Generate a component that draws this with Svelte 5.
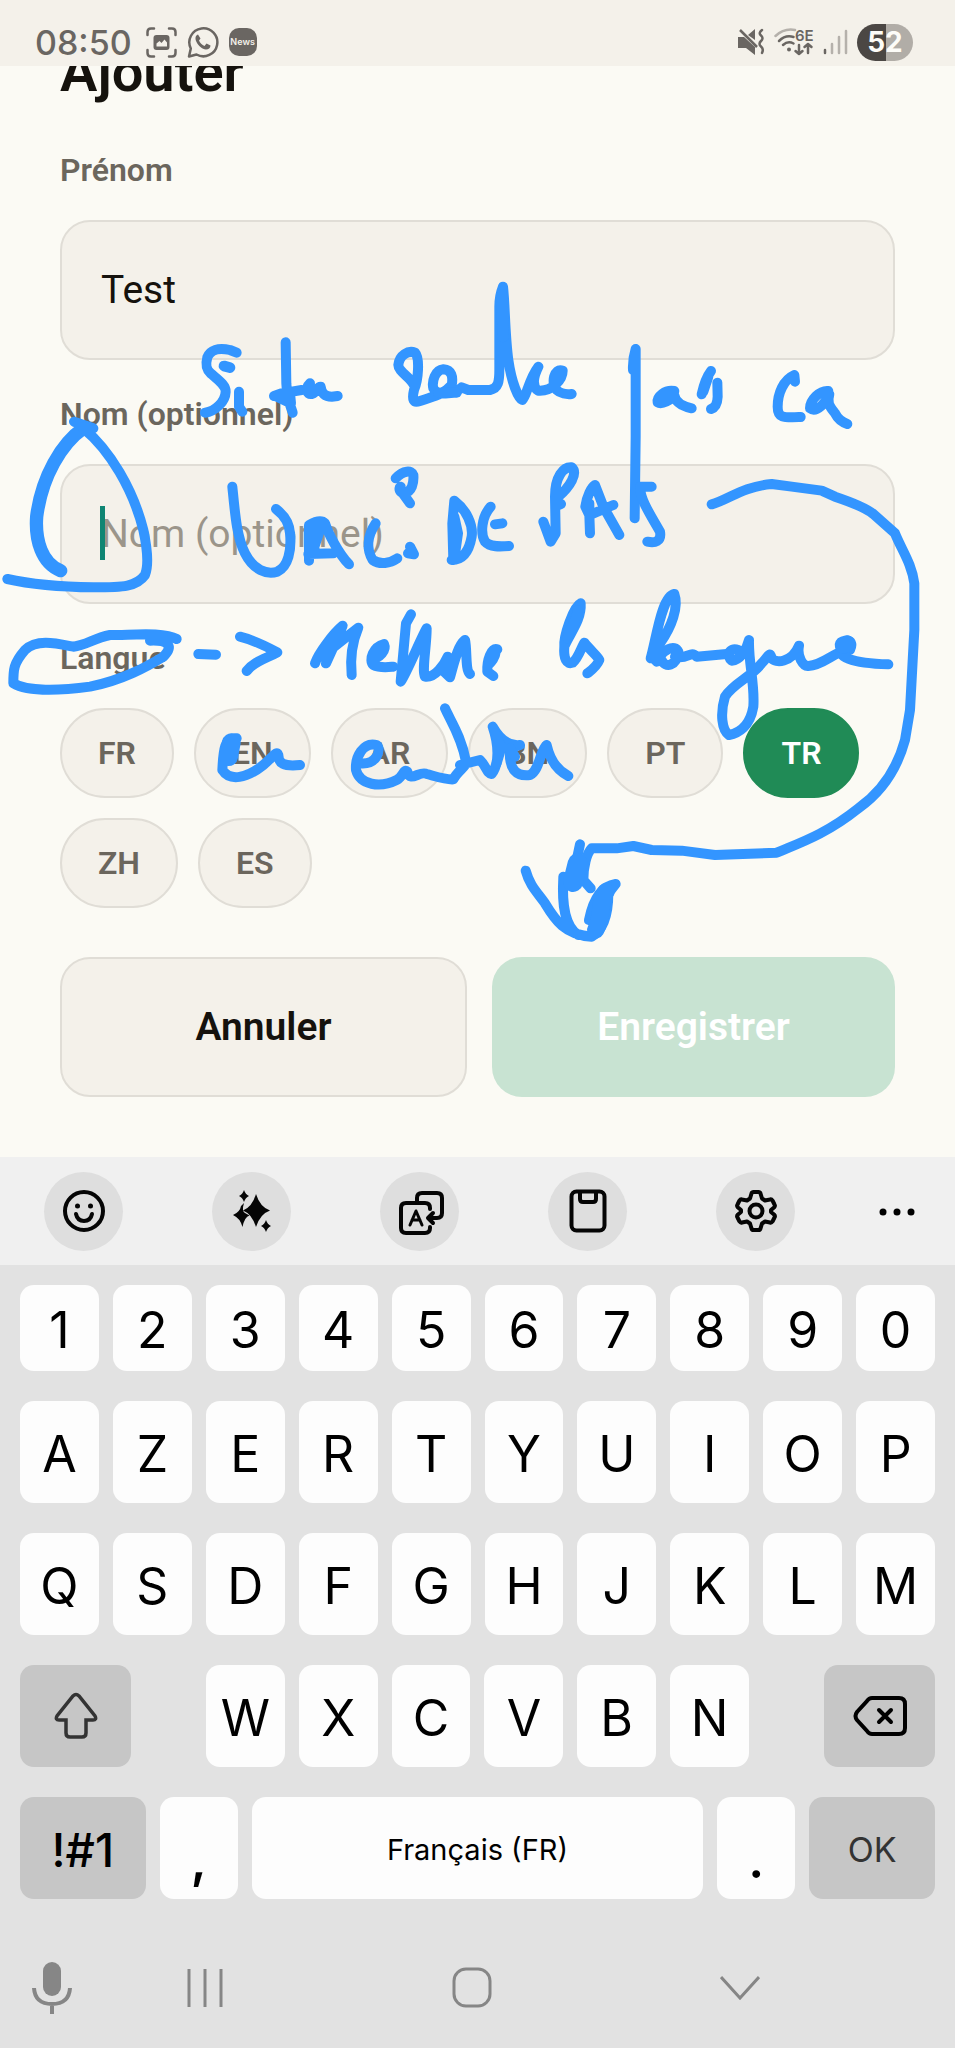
<script lang="ts">
  const languages: string[] = ['FR', 'EN', 'AR', 'BN', 'PT', 'TR', 'ZH', 'ES']
  const keyRows: string[] = ['1234567890', 'AZERTYUIOP', 'QSDFGHJKLM']

  let firstName = $state('Test')
  let lastName = $state('')
  let language = $state('TR')

  const canSave = $derived(firstName !== '' && lastName !== '')
</script>

<div class="screen">
  <header class="status">
    <div class="left">
      <span class="time">08:50</span>
      <svg width="31" height="31" viewBox="0 0 31 31" fill="none">
        <path
          d="M1.500 8V5q0-3.500 3.500-3.500H8M23 1.500h3q3.500 0 3.500 3.500v3M29.500 23v3q0 3.500-3.500 3.500h-3M8 29.500H5q-3.500 0-3.500-3.500v-3"
          stroke="#6a6662"
          stroke-width="2.500"
          stroke-linecap="round"
        />
        <rect x="7.500" y="8" width="16" height="15" rx="3" fill="#6a6662" />
        <path d="M10.500 19.500v-3l3-2.500 2 2 3-3.500 2.500 3v4z" fill="#f4f1ea" />
      </svg>
      <svg width="32" height="32" viewBox="0 0 32 32" fill="none">
        <path
          d="M2 30.500l1.800-8A14 14 0 1 1 9.500 28.500z"
          stroke="#6a6662"
          stroke-width="2.500"
          stroke-linejoin="round"
        />
        <path
          d="M11 8.500c-3 1-3 4.500-1.500 7.500 2 4 5.500 7 9.500 7.500 2.500 0 4.500-1.500 4.500-4l-4-2-2 2.500c-2.500-1-4.500-3-5.500-5.500l1.500-2z"
          fill="#6a6662"
        />
      </svg>
      <span class="news">News</span>
    </div>
    <div class="right">
      <svg width="28" height="28" viewBox="0 0 28 28">
        <path d="M1 9h6L18 19v8l-9-7H1zM11 7l7-6v11z" fill="#6a6662" />
        <path d="M3 2l17 17" stroke="#6a6662" stroke-width="2.500" />
        <path
          d="M25 2q-4 3-1 5.500t0 5.500 0 5.500 1 6.500"
          fill="none"
          stroke="#6a6662"
          stroke-width="2.500"
          stroke-linecap="round"
        />
      </svg>
      <svg width="40" height="30" viewBox="0 0 40 30" fill="none">
        <path d="M1.500 9Q10 1 21 3" stroke="#b5b1ab" stroke-width="2.500" stroke-linecap="round" />
        <g stroke="#6a6662" stroke-width="2.500" stroke-linecap="round" stroke-linejoin="round">
          <path d="M5 14q6.500-6.500 14.500-4M9 18q5-4.500 10.500-1.500" />
          <path d="M25 18v9m-3.500-3l3.500 3 3.500-3M34 26v-9m-3.500 3l3.500-3 3.500 3" />
        </g>
        <circle cx="15" cy="22.500" r="2" fill="#6a6662" />
        <text x="21" y="14" class="wifi-band">6E</text>
      </svg>
      <svg width="25" height="28" viewBox="0 0 25 28" stroke-width="2.500" stroke-linecap="round">
        <path d="M2 22v3" stroke="#6a6662" />
        <path d="M9 16v9M16 9v16M23 3v22" stroke="#b5b1ab" />
      </svg>
      <span class="battery">52</span>
    </div>
  </header>

  <main>
    <h1>Ajouter</h1>

    <form onsubmit={(event) => event.preventDefault()}>
      <div class="field">
        <label for="first-name">Prénom</label>
        <input id="first-name" type="text" bind:value={firstName} />
      </div>

      <div class="field">
        <label for="last-name">Nom (optionnel)</label>
        <div class="focused">
          <input id="last-name" type="text" placeholder="Nom (optionnel)" bind:value={lastName} />
          <span class="caret"></span>
        </div>
      </div>

      <div class="field">
        <span class="label" id="language-label">Langue</span>
        <div class="chips" role="group" aria-labelledby="language-label">
          {#each languages as code}
            <button
              type="button"
              class="chip"
              class:selected={language === code}
              aria-pressed={language === code}
              onclick={() => (language = code)}
            >
              {code}
            </button>
          {/each}
        </div>
      </div>

      <div class="actions">
        <button type="button" class="cancel">Annuler</button>
        <button type="submit" class="save" disabled={!canSave}>Enregistrer</button>
      </div>
    </form>
  </main>

  <!-- Pen strokes, three units to the pixel -->
  <svg class="ink" width="955" height="1000" viewBox="0 0 2865 3000" aria-hidden="true">
    <g transform="translate(570 810)">
      <path d="M140 248L120 240C85 232 60 240 52 262C46 285 48 298 62 310C85 330 108 345 107 365C106 395 75 425 45 428" />
      <path d="M102 288L120 293" stroke-width="32" />
      <path d="M147 365V410L157 425" />
      <path d="M287 217L289 340L292 380L308 428M252 378L275 370L335 360M256 378L292 395L300 370L303 400" />
      <path d="M360 340C345 355 350 375 365 372C385 365 380 350 392 350C395 370 405 380 425 380L443 378" />
      <path d="M672 345C660 320 625 305 625 285C628 255 655 240 675 248C690 265 685 330 672 360C665 390 670 400 690 393C725 380 760 375 785 345C790 320 785 300 760 298C735 300 725 335 730 355C740 378 790 375 815 352L835 360L900 360C925 355 928 335 928 300V110C928 75 935 60 939 50C945 100 945 200 955 270C965 340 985 385 997 390C1010 380 1015 330 1045 290C1030 320 1025 350 1045 362C1085 365 1118 330 1118 302C1092 292 1082 340 1100 360C1110 370 1130 374 1145 372" />
      <path d="M745 368L800 368" />
      <path d="M936 75L939 200" stroke-width="34" />
      <path d="M1337 237C1330 260 1328 280 1329 300M1337 237V500L1334 745" />
      <path d="M127 650C135 730 140 800 165 850C190 900 230 915 262 905C295 890 305 840 300 790C298 755 275 730 258 717" />
      <path d="M357 872V765C375 755 395 750 405 760C415 790 445 850 477 883M355 852L430 850M395 765L370 840M364 770L374 840" />
      <path d="M557 760C530 800 530 840 548 870C570 885 600 880 622 865M660 830L672 853L654 850" />
      <path d="M617 625C640 600 665 600 670 615C672 640 665 665 645 668C628 670 625 655 632 650M640 672L660 700" />
      <path d="M793 692L787 760L790 870M793 692C830 720 850 765 845 800C838 840 820 870 785 870M793 740L804 790L794 860" />
      <path d="M902 710C875 740 870 790 885 815C900 832 930 830 957 828M915 763L937 760" />
      <path d="M1060 755L1082 815L1097 790L1095 680C1095 620 1120 590 1145 592C1165 610 1140 650 1105 680M1100 708L1113 702" />
      <path d="M1200 790L1198 735L1186 710C1190 680 1205 650 1215 645L1240 710L1288 795M1200 735L1270 705M1198 700V735" />
      <path d="M1385 650L1350 650C1350 690 1385 740 1410 785C1415 815 1395 820 1372 815" />
      <path d="M25 1152L78 1154M150 1100C190 1110 240 1135 262 1147C230 1165 190 1175 170 1203" />
      <path d="M375 1180C385 1150 430 1090 458 1067L440 1110L408 1180L420 1140L505 1073C485 1120 480 1165 485 1215M395 1160L440 1100" />
      <path d="M545 1165C570 1165 590 1140 582 1122C550 1130 535 1170 550 1185C570 1195 590 1192 610 1190" />
      <path d="M663 1033L648 1060L632 1235C650 1210 690 1110 710 1075C710 1130 695 1200 705 1220C735 1225 765 1180 773 1160L762 1205L780 1222C790 1190 800 1130 825 1110C832 1140 825 1200 840 1212" />
      <path d="M922 1138C905 1130 890 1170 892 1205L910 1218M918 1142C915 1165 905 1175 895 1185" />
      <path d="M1172 1000C1150 1010 1120 1100 1123 1130C1120 1165 1130 1185 1148 1178C1165 1165 1175 1130 1183 1118C1200 1140 1225 1160 1228 1170C1220 1190 1205 1200 1192 1210M1172 1000C1175 1050 1140 1090 1125 1125" />
      <path d="M1162 1020C1162 1050 1142 1070 1132 1105" />
      <path d="M140 1405C100 1400 100 1450 97 1500C120 1535 170 1525 220 1485C250 1460 260 1440 265 1455C265 1480 280 1490 330 1485" />
      <path d="M124 1418L116 1460" stroke-width="56" />
      <path d="M510 1480C560 1485 575 1440 560 1425C520 1415 495 1460 498 1500C510 1545 570 1555 620 1530C640 1520 640 1495 652 1505C660 1540 690 1500 710 1512C740 1520 770 1530 790 1528C805 1500 830 1490 828 1475C815 1400 780 1350 765 1315M810 1485L870 1470C890 1490 890 1510 905 1512C930 1480 925 1420 908 1370C925 1400 950 1430 990 1425L960 1435C955 1500 980 1520 1020 1515C1050 1500 1050 1440 1070 1425C1080 1470 1100 1500 1135 1518" />
      <path d="M915 1390L935 1430L920 1480M960 1435L975 1460" />
    </g>
    <g transform="translate(1425 600)">
      <path d="M598 573C570 568 545 590 548 607C560 615 590 600 598 585C600 605 620 618 650 625M565 595L590 582" />
      <path d="M708 513C695 530 685 560 680 583M700 530L685 575M727 548L728 590C727 612 722 622 708 627" />
      <path d="M960 545L958 525C925 540 908 580 908 620C908 655 925 653 977 651M1060 573C1035 570 1005 600 1005 625C1025 640 1055 605 1063 583C1055 610 1065 620 1080 640C1090 660 1105 668 1117 672" />
    </g>
    <g transform="translate(1425 1350)">
      <path d="M527 625C545 560 560 440 598 432C612 470 590 530 555 580C540 600 530 625 545 635C560 600 600 580 610 605C605 650 570 655 560 630M600 620C640 630 645 600 665 620L755 612" />
      <path d="M790 600C760 590 755 620 770 632C795 630 815 600 822 570C820 640 840 700 835 770C825 830 790 850 762 855C740 840 735 790 750 740C775 700 830 680 860 640C880 620 885 600 890 625C900 640 950 640 972 587C965 620 985 650 1000 648C1050 645 1080 600 1125 600C1140 570 1110 560 1100 590C1080 620 1130 640 1240 643" />
      <path d="M1105 585L1115 582" stroke-width="52" />
      <path d="M710 163C760 150 800 110 890 102L950 110L1040 122L1080 140C1140 160 1180 180 1195 192L1260 250C1280 300 1310 340 1318 400V540L1305 780L1290 870C1260 980 1200 1040 1150 1075C1050 1155 970 1180 905 1208L720 1215L620 1202L530 1200L475 1188L425 1195L350 1195C335 1210 325 1250 325 1290L347 1315" />
      <path d="M152 1262C165 1310 190 1330 210 1360C240 1410 270 1455 350 1460C385 1440 400 1390 400 1330L422 1302C370 1310 350 1370 342 1410L375 1420M265 1280C260 1370 270 1430 310 1455M315 1183L305 1230" />
      <path d="M308 1240L294 1296" stroke-width="60" />
      <path d="M393 1325C370 1350 385 1400 362 1440" stroke-width="52" />
    </g>
    <g transform="translate(0 1350)">
      <path d="M182 362C125 340 105 270 110 200C125 80 185 -20 250 -65" stroke-width="40" />
      <path d="M222 -85L280 -65M250 -65C330 0 400 120 430 240C445 310 445 350 435 375C410 410 370 412 280 412C150 410 80 400 22 387" />
      <path d="M530 567C490 545 400 555 330 555C280 565 260 585 220 590C170 580 110 565 75 600C40 640 40 660 40 700C80 725 180 722 270 710C370 690 440 650 490 620C520 590 510 570 450 572" />
    </g>
  </svg>

  <section class="keyboard">
    <div class="toolbar">
      <div class="tools">
        <button class="tool" aria-label="Emoji">
          <svg viewBox="0 0 44 44">
            <circle cx="22" cy="22" r="19" />
            <path d="M14 25q1.500 7 8 7t8-7" />
            <circle class="solid" cx="15.500" cy="17" r="2.500" />
            <circle class="solid" cx="28.500" cy="17" r="2.500" />
          </svg>
        </button>
        <button class="tool" aria-label="Assistant">
          <svg viewBox="0 0 44 44">
            <g class="solid">
              <path d="M26 5q4 13 14 16.500Q30 25 26 38 22 25 13 21.500 22 18 26 5z" />
              <path d="M14 14q-2.500 8 1 10l4.500 2.500Q14.500 28 12.500 38 10 29 3 26q7-3 8-9z" />
              <path d="M14 1q1.500 4.500 5 6-3.500 1.500-5 6-1.500-4.500-5-6 3.500-1.500 5-6zM36 31q1.500 4.500 5 6-3.500 1.500-5 6-1.500-4.500-5-6 3.500-1.500 5-6z" />
            </g>
          </svg>
        </button>
        <button class="tool" aria-label="Translate">
          <svg viewBox="0 0 44 44">
            <path d="M32 20v-1q0-5-5-5H8q-5 0-5 5v20q0 5 5 5h19q5 0 5-5v-1" />
            <path d="M19 13V9q0-5 5-5h15q5 0 5 5v15q0 5-5 5h-8m4-5l-5 5 5 5" />
            <path d="M12 36l6-14 6 14m-10-5h8" stroke-width="3" />
          </svg>
        </button>
        <button class="tool" aria-label="Clipboard">
          <svg viewBox="0 0 44 44">
            <rect x="5.500" y="2.500" width="33" height="39" rx="5" />
            <path d="M14 4v6q0 3 3 3h10q3 0 3-3V4" />
          </svg>
        </button>
        <button class="tool" aria-label="Settings">
          <svg viewBox="0 0 44 44">
            <path d="M19.500 3h5q1.500 0 2 1.500l1.500 5 3 2 5-1q1.500-.5 2.500 1l2 4q1 1.500-.5 3L37 21v2l3 2.500q1.500 1.500.5 3l-2 4q-1 1.500-2.500 1l-5-1-3 2-1.500 5q-.5 1.500-2 1.500h-5q-1.500 0-2-1.500l-1.500-5-3-2-5 1q-1.500.5-2.500-1l-2-4q-1-1.500.5-3L7 23v-2l-3-2.500q-1.500-1.500-.5-3l2-4q1-1.500 2.500-1l5 1 3-2 1.500-5q.5-1.500 2-1.500z" />
            <circle cx="22" cy="22" r="6.500" />
          </svg>
        </button>
      </div>
      <button class="more" aria-label="More">
        <svg width="36" height="8" viewBox="0 0 36 8">
          <circle cx="4" cy="4" r="3.500" />
          <circle cx="18" cy="4" r="3.500" />
          <circle cx="32" cy="4" r="3.500" />
        </svg>
      </button>
    </div>

    <div class="keys">
      {#each keyRows as row, rowIndex}
        <div class="row" class:digits={rowIndex === 0}>
          {#each row as key}
            <button class="key">{key}</button>
          {/each}
        </div>
      {/each}

      <div class="row">
        <button class="key dark shift" aria-label="Shift">
          <svg width="46" height="48" viewBox="0 0 46 48">
            <path
              d="M20 4q3-3 6 0l16 20q2 4-2 4h-7v13q0 4-4 4H17q-4 0-4-4V28H6q-4 0-2-4z"
              fill="none"
              stroke="#333"
              stroke-width="3.500"
            />
          </svg>
        </button>
        <div class="letters">
          {#each 'WXCVBN' as key}
            <button class="key">{key}</button>
          {/each}
        </div>
        <button class="key dark shift" aria-label="Backspace">
          <svg width="54" height="42" viewBox="0 0 54 42" fill="none" stroke="#000" stroke-width="4" stroke-linecap="round">
            <path d="M19 3h27q6 0 6 6v24q0 6-6 6H19q-3 0-5-3L4 25q-3-4 0-8L14 6q2-3 5-3z" />
            <path d="M26 15l12 12m0-12L26 27" />
          </svg>
        </button>
      </div>

      <div class="row">
        <button class="key dark symbols">!#1</button>
        <button class="key mark">,</button>
        <button class="key space">Français (FR)</button>
        <button class="key mark">.</button>
        <button class="key dark ok">OK</button>
      </div>
    </div>

    <nav>
      <button aria-label="Voice input">
        <svg viewBox="0 0 40 54">
          <rect x="11" y="1" width="18" height="34" rx="9" fill="#868686" stroke="none" />
          <path d="M2 27q1 16 18 16t18-16M20 43v10" stroke-width="4" />
        </svg>
      </button>
      <button aria-label="Recents">
        <svg viewBox="0 0 40 54"><path d="M4 8v38M20 8v38M36 8v38" /></svg>
      </button>
      <button aria-label="Home">
        <svg viewBox="0 0 40 54"><rect x="2" y="8" width="36" height="37" rx="12" /></svg>
      </button>
      <button aria-label="Hide keyboard">
        <svg viewBox="0 0 40 54"><path d="M1 16l19 21 19-21" /></svg>
      </button>
    </nav>
  </section>
</div>

<style>
  :global(body) {
    margin: 0;
    background: #e2e2e2;
  }

  .screen {
    position: relative;
    background: #fbfaf4;
    font-family: Roboto, 'Liberation Sans', sans-serif;
    overflow: hidden;
  }

  button,
  input {
    box-sizing: border-box;
    margin: 0;
    padding: 0;
    border: 0;
    font-family: inherit;
  }

  .status {
    display: flex;
    justify-content: space-between;
    box-sizing: border-box;
    height: 66px;
    padding: 18px 42px 0 35px;
    background: #f4f1ea;
    color: #6a6662;
    font-family: Inter, sans-serif;
  }

  .left,
  .right {
    display: flex;
    align-items: center;
    height: 48px;
  }

  .left {
    gap: 10px;
  }

  .right {
    gap: 9px;
  }

  .time {
    margin-right: 4px;
    font-size: 34px;
    font-weight: 500;
  }

  .news {
    width: 28px;
    height: 28px;
    border-radius: 10px;
    background: #6a6662;
    color: #f4f1ea;
    font-size: 9px;
    font-weight: 600;
    line-height: 28px;
    text-align: center;
  }

  .wifi-band {
    fill: #6a6662;
    font-size: 15px;
    font-weight: 600;
  }

  .battery {
    width: 56px;
    height: 37px;
    border-radius: 19px;
    background: linear-gradient(to right, #4b4744 51%, #b1ada7 51%);
    color: #fdfcf8;
    font-size: 28px;
    font-weight: 700;
    line-height: 37px;
    text-align: center;
  }

  /* Scrolled a little, so the title is cut off by the status bar */
  main {
    padding: 0 60px 60px;
    overflow: hidden;
  }

  h1 {
    margin: -24px 0 48px;
    color: #15120d;
    font-size: 56px;
    font-weight: 600;
    line-height: 61px;
  }

  form {
    display: flex;
    flex-direction: column;
    gap: 35px;
  }

  .field {
    display: flex;
    flex-direction: column;
    gap: 30px;
  }

  label,
  .label {
    color: #6b665d;
    font-size: 32px;
    font-weight: 600;
    line-height: 39px;
  }

  input {
    width: 100%;
    height: 140px;
    padding: 0 39px;
    border: 2px solid #e0ddd6;
    border-radius: 30px;
    outline: 0;
    background: #f4f1ea;
    color: #15120d;
    font-size: 39px;
  }

  input::placeholder {
    color: #9b958a;
    opacity: 1;
  }

  .focused {
    position: relative;
  }

  .caret {
    position: absolute;
    top: 42px;
    left: 40px;
    width: 5px;
    height: 54px;
    background: #0f8573;
  }

  .chips {
    display: flex;
    flex-wrap: wrap;
    gap: 20px;
  }

  .chip {
    height: 90px;
    padding: 0 36px;
    border: 2px solid #e0ddd6;
    border-radius: 45px;
    background: #f4f1ea;
    color: #6b665d;
    font-size: 32px;
    font-weight: 600;
  }

  .chip.selected {
    border-color: #208b56;
    background: #208b56;
    color: #fff;
  }

  .actions {
    display: flex;
    gap: 25px;
    margin-top: 14px;
  }

  .actions button {
    flex: 1;
    height: 140px;
    border-radius: 30px;
    font-size: 39px;
    font-weight: 600;
  }

  .cancel {
    border: 2px solid #e0ddd6;
    background: #f4f1ea;
    color: #15120d;
  }

  .save {
    background: #208b56;
    color: #fff;
  }

  .save:disabled {
    background: #c8e3d2;
  }

  .ink {
    position: absolute;
    top: 0;
    left: 0;
    fill: none;
    stroke: #3395ff;
    stroke-width: 30px;
    stroke-linecap: round;
    stroke-linejoin: round;
    pointer-events: none;
  }

  .keyboard {
    background: #e2e2e2;
    font-family: Inter, sans-serif;
  }

  .toolbar {
    display: flex;
    justify-content: space-between;
    align-items: center;
    box-sizing: border-box;
    height: 108px;
    padding: 0 40px 0 44px;
    background: #f0f0f0;
  }

  .tools {
    display: flex;
    gap: 89px;
  }

  .tool {
    display: grid;
    place-content: center;
    width: 79px;
    height: 79px;
    border-radius: 50%;
    background: #dedede;
  }

  .tool svg {
    width: 44px;
    height: 44px;
    overflow: visible;
    fill: none;
    stroke: #050505;
    stroke-width: 4px;
    stroke-linecap: round;
    stroke-linejoin: round;
  }

  .tool .solid {
    fill: #050505;
    stroke: none;
  }

  .more {
    width: 36px;
    background: none;
  }

  .keys {
    display: flex;
    flex-direction: column;
    gap: 30px;
    padding: 20px 20px 0;
  }

  .row,
  .letters {
    display: flex;
    gap: 14px;
  }

  .letters {
    flex: 543;
    margin: 0 61px;
  }

  .key {
    display: grid;
    flex: 1 1 0;
    place-content: center;
    min-width: 0;
    height: 102px;
    padding-top: 3px;
    border-radius: 14px;
    background: #fdfdfd;
    color: #000;
    font-size: 50px;
  }

  .digits .key {
    height: 86px;
  }

  .dark {
    background: #c6c6c6;
  }

  .shift {
    flex-grow: 111;
    padding-top: 0;
  }

  .symbols,
  .ok {
    flex-grow: 125;
  }

  .symbols {
    font-size: 46px;
    font-weight: 500;
  }

  .ok {
    color: #333;
    font-size: 34px;
  }

  .mark {
    flex-grow: 78;
    padding-top: 24px;
    font-weight: 600;
  }

  .space {
    flex-grow: 449;
    font-size: 29px;
  }

  nav {
    display: grid;
    grid-template-columns: 153fr 267fr 268fr 235fr;
    align-items: center;
    box-sizing: border-box;
    height: 149px;
    padding-left: 32px;
  }

  nav button {
    width: 40px;
    height: 54px;
    margin-top: 28px;
    background: none;
  }

  nav svg {
    display: block;
    fill: none;
    stroke: #868686;
    stroke-width: 3px;
  }
</style>
